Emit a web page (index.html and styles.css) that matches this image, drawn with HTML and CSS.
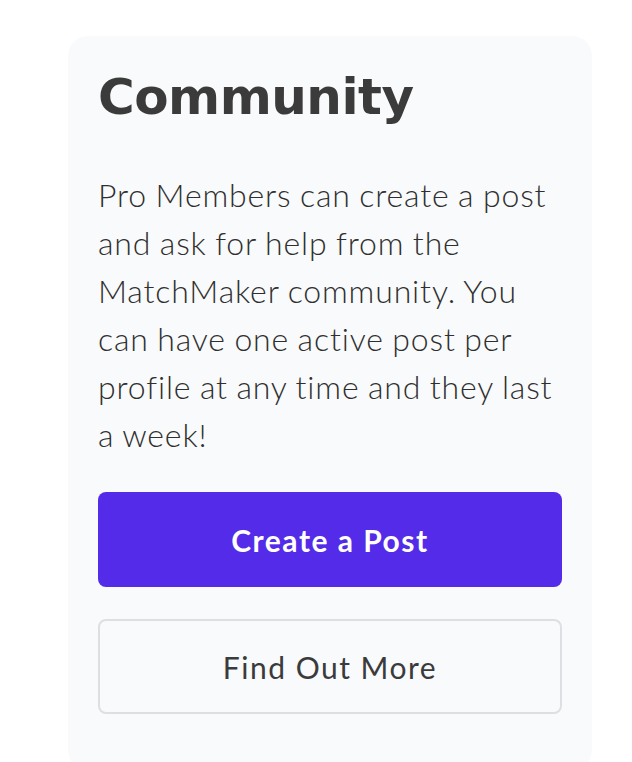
FILE: index.html
```html
<!DOCTYPE html>
<html lang="en">
<head>
<meta charset="utf-8">
<title>Community</title>
<link rel="stylesheet" href="styles.css">
</head>
<body>
<div class="page">
  <section class="card">
    <h1 class="card-title">Community</h1>
    <p class="card-text">Pro Members can create a post and ask for help from the MatchMaker community. You can have one active post per profile at any time and they last a week!</p>
    <div class="actions">
      <button class="btn btn-primary" type="button">Create a Post</button>
      <button class="btn btn-secondary" type="button">Find Out More</button>
    </div>
  </section>
</div>
</body>
</html>
```
FILE: styles.css
```css
html, body {
  margin: 0;
  padding: 0;
  background: #ffffff;
}
.page {
  padding: 36px 40px 0 68px;
}
.card {
  width: 524px;
  box-sizing: border-box;
  background: #f9fafb;
  border-radius: 20px;
  padding: 30px 30px 56px;
}
.card-title {
  margin: 0;
  font-family: "DejaVu Sans", sans-serif;
  font-weight: bold;
  font-size: 50px;
  line-height: 63px;
  letter-spacing: -0.5px;
  color: #3b3b3b;
}
.card-text {
  margin: 42px 0 0;
  font-family: Lato, sans-serif;
  font-weight: 300;
  font-size: 32px;
  line-height: 48px;
  letter-spacing: 0.85px;
  word-spacing: -1px;
  color: #2f2f2f;
}
.actions {
  display: flex;
  flex-direction: column;
  gap: 32px;
  margin-top: 33px;
}
.btn {
  height: 95px;
  width: 100%;
  border-radius: 8px;
  font-family: Lato, sans-serif;
  font-size: 30px;
  letter-spacing: 1.5px;
  cursor: pointer;
}
.btn-primary {
  background: #532be9;
  border: none;
  color: #ffffff;
  font-weight: bold;
}
.btn-secondary {
  background: #f9fafb;
  border: 2px solid #dddfe2;
  color: #3b3b3b;
  font-weight: 400;
}
```
